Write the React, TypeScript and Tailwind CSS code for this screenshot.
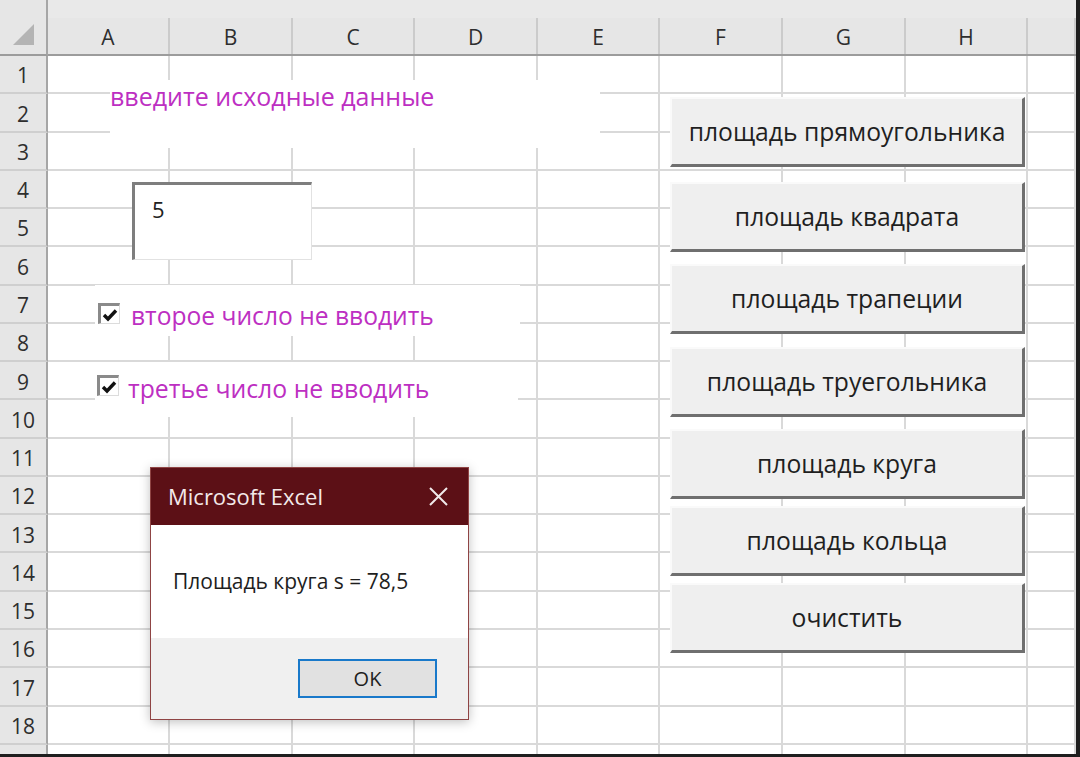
import React from "react";

const cols = ["A", "B", "C", "D", "E", "F", "G", "H", ""];
const rows = Array.from({ length: 18 }, (_, i) => i + 1);

const buttons = [
  { label: "площадь прямоугольника", top: 97 },
  { label: "площадь квадрата", top: 182 },
  { label: "площадь трапеции", top: 264 },
  { label: "площадь труегольника", top: 347 },
  { label: "площадь круга", top: 429 },
  { label: "площадь кольца", top: 506 },
  { label: "очистить", top: 583 },
];

const font = { fontFamily: '"Open Sans", "Noto Sans", sans-serif' };

function CheckBox() {
  return (
    <div className="w-[22px] h-[21px] bg-white border-t-[3px] border-l-[3px] border-t-[#8a8a8a] border-l-[#8a8a8a] border-r border-b border-r-[#dcdcdc] border-b-[#dcdcdc] flex items-center justify-center">
      <svg width="16" height="14" viewBox="0 0 16 14">
        <path d="M2 7 L6 11 L14 2.5" fill="none" stroke="#111" strokeWidth="3.4" />
      </svg>
    </div>
  );
}

export default function App() {
  return (
    <div className="relative w-[1080px] h-[757px] overflow-hidden bg-[#1e1e1e]" style={font}>
      <div className="w-[1076px] h-[754px] bg-white overflow-hidden">
        {/* sheet grid */}
        <div className="grid grid-cols-[48px_122px_123px_122px_123px_122px_123px_123px_122px_48px] grid-rows-[56px_repeat(18,38.28px)_20px]">
          {/* header row */}
          <div className="bg-[#e6e6e6] border-r-2 border-b-2 border-r-[#a6a6a6] border-b-[#9c9c9c] flex items-end justify-center pb-[7px]">
            <svg width="22" height="22" viewBox="0 0 22 22" className="mb-[1px] ml-[2px]">
              <polygon points="21,0 21,21 0,21" fill="#b4b4b4" />
            </svg>
          </div>
          {cols.map((c, i) => (
            <div key={i} className="bg-[#e6e6e6] border-b-2 border-b-[#9c9c9c] flex flex-col">
              <div className="h-[18px] bg-[#e9e9e9]" />
              <div className="flex-1 border-r-2 border-r-[#cbcbcb] flex items-center justify-center pt-[4px] text-[21px] text-[#2e2e2e]">
                {c}
              </div>
            </div>
          ))}
          {/* body rows */}
          {rows.map((r) => (
            <React.Fragment key={r}>
              <div className="bg-[#e6e6e6] border-r-2 border-b-2 border-r-[#a6a6a6] border-b-[#cfcfcf] flex items-center justify-center pt-[4px] text-[21px] text-[#2e2e2e]">
                {r}
              </div>
              {cols.map((_, i) => (
                <div key={i} className="border-r-2 border-b-2 border-[#d9d9d9]" />
              ))}
            </React.Fragment>
          ))}
          <div className="bg-[#e6e6e6] border-r-2 border-r-[#a6a6a6]" />
          {cols.map((_, i) => (
            <div key={i} className="border-r-2 border-[#d9d9d9]" />
          ))}
        </div>
      </div>

      {/* form controls lying on the sheet */}
      <div className="absolute left-[110px] top-[80px] w-[490px] h-[68px] bg-white">
        <div className="-mt-[1px] text-[25px] leading-[34px] text-[#bd2fc2]">введите исходные данные</div>
      </div>

      <div className="absolute left-[132px] top-[182px] w-[180px] h-[78px] bg-white border-t-[3px] border-l-[3px] border-t-[#7e7e7e] border-l-[#7e7e7e] border-r border-b border-r-[#e2e2e2] border-b-[#e2e2e2] pl-[17px] pt-[9px] text-[22px] leading-[30px] text-[#222]">
        5
      </div>

      <div className="absolute left-[95px] top-[285px] w-[425px] h-[51px] bg-white flex items-start pt-[18px] gap-[11px] pl-[3px]">
        <CheckBox />
        <span className="text-[24.6px] text-[#bd2fc2] leading-[30px] -mt-[2px]">второе число не вводить</span>
      </div>

      <div className="absolute left-[95px] top-[362px] w-[423px] h-[55px] bg-white flex items-start pt-[13px] gap-[9px] pl-[2px]">
        <CheckBox />
        <span className="text-[24.8px] text-[#bd2fc2] leading-[30px] -mt-[2px]">третье число не вводить</span>
      </div>

      {buttons.map((b) => (
        <div
          key={b.label}
          className="absolute left-[670px] w-[355px] h-[70px] bg-[#efefef] border-t-2 border-l-2 border-t-[#fafafa] border-l-[#fafafa] border-r-[3px] border-b-[3px] border-r-[#6f6f6f] border-b-[#6f6f6f] flex items-center justify-center text-[24.7px] text-[#1f1f1f]"
          style={{ top: b.top }}
        >
          {b.label}
        </div>
      ))}

      {/* message box */}
      <div className="absolute left-[150px] top-[467px] w-[319px] h-[253px] border border-[#8f4444] bg-white flex flex-col shadow-[0_2px_10px_rgba(0,0,0,0.25)]">
        <div className="h-[57px] bg-[#5c1016] flex items-center justify-between pl-[17px] pr-[20px]">
          <span className="text-[22px] text-[#f3e9e9]">Microsoft Excel</span>
          <svg width="19" height="19" viewBox="0 0 19 19">
            <path d="M1 1 L18 18 M18 1 L1 18" stroke="#f0eaea" strokeWidth="2" />
          </svg>
        </div>
        <div className="h-[113px] bg-white flex items-center pl-[22px] text-[21px] text-[#1e1e1e]">
          Площадь круга s = 78,5
        </div>
        <div className="flex-1 bg-[#f0f0f0] flex justify-end items-start pt-[21px] pr-[31px]">
          <div className="w-[139px] h-[39px] bg-[#e1e1e1] border-2 border-[#1979ca] flex items-center justify-center text-[20px] text-[#1e1e1e]">
            OK
          </div>
        </div>
      </div>
    </div>
  );
}
